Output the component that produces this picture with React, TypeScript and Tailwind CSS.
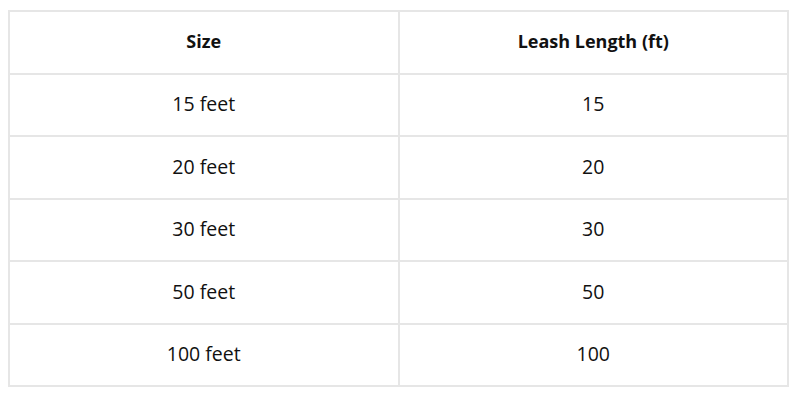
const rows = [
  { size: '15 feet', length: '15' },
  { size: '20 feet', length: '20' },
  { size: '30 feet', length: '30' },
  { size: '50 feet', length: '50' },
  { size: '100 feet', length: '100' },
];

export default function App() {
  return (
    <div className="w-[800px] h-[400px] bg-white pt-[10px] pl-[8px]" style={{ fontFamily: '"Open Sans", sans-serif' }}>
      <table className="w-[781px] border-collapse table-fixed text-[#111]">
        <thead>
          <tr className="h-[62.5px] text-[18px]">
            <th className="border-2 border-[#e6e6e6] font-bold text-center pb-[2px]">Size</th>
            <th className="border-2 border-[#e6e6e6] font-bold text-center pb-[2px]">Leash Length (ft)</th>
          </tr>
        </thead>
        <tbody className="text-[19.5px]">
          {rows.map((r) => (
            <tr key={r.size} className="h-[62.5px]">
              <td className="border-2 border-[#e6e6e6] text-center pb-[2px]">{r.size}</td>
              <td className="border-2 border-[#e6e6e6] text-center pb-[2px]">{r.length}</td>
            </tr>
          ))}
        </tbody>
      </table>
    </div>
  );
}
